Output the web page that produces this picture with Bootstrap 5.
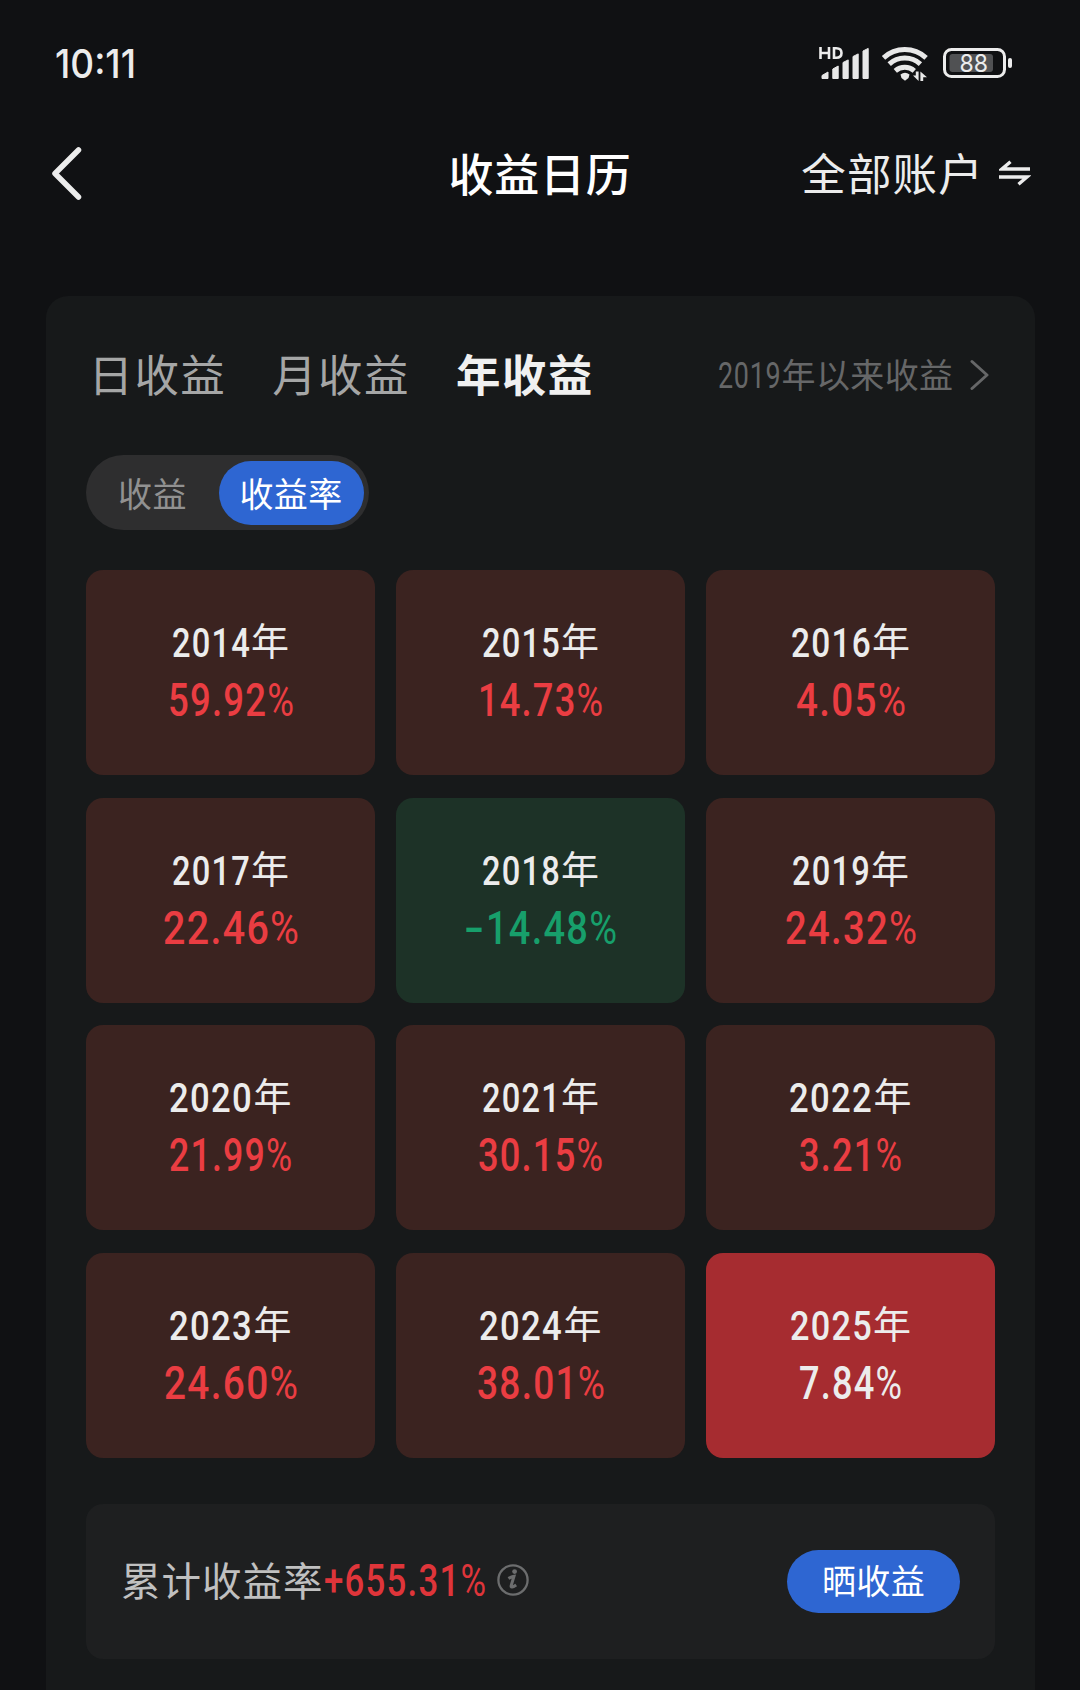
<!DOCTYPE html>
<html lang="zh-CN">
<head>
<meta charset="utf-8">
<meta name="viewport" content="width=device-width, initial-scale=1">
<title>收益日历</title>
<link href="https://cdn.jsdelivr.net/npm/bootstrap@5.3.0/dist/css/bootstrap.min.css" rel="stylesheet">
<style>
  body { background:#101113; color:#ececec; font-family:"Noto Sans CJK SC",sans-serif; line-height:1; height:1690px; overflow:hidden; }
  .num { font-family:Roboto,"Noto Sans CJK SC",sans-serif; font-weight:500; letter-spacing:1.5px; }
  .num i { font-style:normal; font-weight:400; letter-spacing:0; }
  .fit { display:inline-block; white-space:pre; transform-origin:0 50%; }
  svg { display:block; flex:none; }
  .status { height:118px; padding:0 66px 0 54.5px; }
  .clock { font-family:Inter,sans-serif; font-size:39px; font-weight:500; margin-top:8px; }
  .signals { margin-top:10px; }
  .topnav { height:110px; padding:0 49px 0 51px; }
  .topnav > * { flex:1 1 0; }
  .title { font-size:45px; font-weight:500; letter-spacing:.8px; color:#fff; padding-right:2px; margin-top:-2px; }
  .acct { font-size:44.5px; letter-spacing:1.2px; margin-top:-2px; }
  .swap { margin-left:15px; }
  .panel { margin:68px 45px 0 46px; padding:0 40px 0 40px; height:1394px; background:#17191a; border-radius:22px 22px 0 0; }
  .tabs { padding:54.5px 0 0 2.5px; height:159px; }
  .tablist { gap:46px; }
  .tab { font-size:44.5px; letter-spacing:1.4px; color:#a5a6a6; }
  .tab.on { color:#f0f0f0; font-weight:700; }
  .since { color:#666768; font-size:34px; letter-spacing:.4px; margin-top:6px; }
  .since .num { font-size:36px; font-weight:400; letter-spacing:1px; }
  .more { margin:2.5px 5px 0 16.5px; }
  .seg { width:283px; height:75px; border-radius:38px; background:#2e2e2f; padding:0 5px 0 32px; font-size:34px; letter-spacing:.4px; color:#919191; }
  .seg .pick { width:145px; height:64px; border-radius:32px; background:#2e66d2; color:#fff; padding-right:1px; }
  .years { margin-top:40px; display:grid; grid-template-columns:repeat(3,289px); grid-auto-rows:205px; gap:22.67px 21px; }
  .tile { background:#3b2320; border-radius:17px; padding-top:50px; text-align:center; }
  .tile .yr { height:58px; font-size:38px; line-height:1; color:#ececec; }
  .tile .yr .num { font-size:40px; vertical-align:-2px; }
  .tile .pct { font-size:45.5px; color:#ea3d42; }
  .tile.down { background:#1d3227; }
  .tile.down .pct { color:#179f6b; }
  .tile.now { background:#a62c30; }
  .tile.now .pct { color:#ececec; }
  .total { margin-top:46px; height:155px; border-radius:17px; background:#1e1f20; padding:0 35px 0 35px; }
  .total .cap { font-size:39.5px; letter-spacing:1px; color:#c0c0c0; }
  .total .num { font-size:44px; color:#df353a; }
  .info { margin:-2px 0 0 11px; }
  .share { width:173px; height:63px; border-radius:32px; background:#2e66d2; color:#fff; font-size:34px; letter-spacing:.4px; padding-bottom:2px; }
</style>
</head>
<body>
<header>
  <div class="status d-flex justify-content-between align-items-center">
    <span class="clock"><span class="fit" data-w="81">10:11</span></span>
    <svg class="signals" width="196" height="40" viewBox="818 44 196 40">
      <g fill="none" stroke="#ececec" stroke-width="2.6"><path d="M820.500 47v12M829 47v12M820.500 53h8.500M834 48.300v9.400h2.200c3.600 0 5.300-1.600 5.300-4.700s-1.700-4.700-5.300-4.700z"/></g>
      <g fill="#e8e8e8" stroke="#e8e8e8" stroke-width="1" stroke-linejoin="round"><path d="M822 78.500v-3l6-3.500v6.500zM832.800 78.500V69l5.400-3v12.500zM843 78.500V62.500l5.200-2.600v18.600zM853 78.500V56.500l5.200-2.600v24.600zM863 78.500V51l5.200-2.600v30.100z"/></g>
      <g fill="none" stroke="#e8e8e8" stroke-width="5"><path d="M883.500 57.800a31.500 31.500 0 0 1 42.600 0M889.200 64.200a23 23 0 0 1 31.200 0M895.300 70.800a14.500 14.500 0 0 1 19 0"/></g>
      <path d="M900.500 74.500q4.500-3.500 9 0l-1 3.500-3.500 2.800-3.500-2.800z" fill="#e8e8e8"/>
      <path d="M913 75.500l5.600 5.500V71.500h-2.800v4zM920.400 81V71.500l6.600 5.700h-3.800V81z" fill="#e8e8e8"/>
      <rect x="944.500" y="49.500" width="60" height="27" rx="7" fill="none" stroke="#ececec" stroke-width="3"/>
      <rect x="949.500" y="54" width="43.500" height="18" rx="3" fill="#505153"/>
      <text x="959.500" y="72" font-family="Inter, sans-serif" font-size="24" font-weight="400" fill="#ececec" textLength="28.500" lengthAdjust="spacingAndGlyphs">88</text>
      <rect x="1008" y="58" width="4" height="10" rx="2" fill="#ececec"/>
    </svg>
  </div>
  <nav class="topnav d-flex align-items-center">
    <div><svg width="32" height="56" viewBox="51 145 32 56" fill="none" stroke="#ececec" stroke-width="5.500" stroke-linecap="round" stroke-linejoin="round"><path d="M78.500 150L55 173.500 78.500 197"/></svg></div>
    <div class="title text-center">收益日历</div>
    <div class="d-flex justify-content-end align-items-center">
      <span class="acct text-nowrap">全部账户</span>
      <svg class="swap" width="32" height="26" viewBox="0 0 32 26" fill="none" stroke="#ececec" stroke-width="3.400"><path d="M31 9H3L11.500 1.800M0 17h28l-8.500 7.200"/></svg>
    </div>
  </nav>
</header>
<main class="panel">
  <div class="tabs d-flex justify-content-between">
    <div class="tablist d-flex"><span class="tab">日收益</span><span class="tab">月收益</span><span class="tab on">年收益</span></div>
    <div class="since d-flex"><div><span class="num"><span class="fit" data-w="63.5">2019</span></span>年以来收益</div>
      <svg class="more" width="20" height="32" viewBox="0 0 20 32" fill="none" stroke="#666768" stroke-width="3" stroke-linecap="round" stroke-linejoin="round"><path d="M2 2.500L17 16 2 29.500"/></svg></div>
  </div>
  <div class="seg d-flex align-items-center justify-content-between"><span>收益</span><span class="pick d-flex align-items-center justify-content-center">收益率</span></div>
  <section class="years">
    <div class="tile"><div class="yr"><span class="num fit" data-w="79">2014</span>年</div><div class="pct num"><span class="fit" data-w="126">59.92<i>%</i></span></div></div>
    <div class="tile"><div class="yr"><span class="num fit" data-w="79">2015</span>年</div><div class="pct num"><span class="fit" data-w="125">14.73<i>%</i></span></div></div>
    <div class="tile"><div class="yr"><span class="num fit" data-w="81">2016</span>年</div><div class="pct num"><span class="fit" data-w="110">4.05<i>%</i></span></div></div>
    <div class="tile"><div class="yr"><span class="num fit" data-w="79">2017</span>年</div><div class="pct num"><span class="fit" data-w="136">22.46<i>%</i></span></div></div>
    <div class="tile down"><div class="yr"><span class="num fit" data-w="79">2018</span>年</div><div class="pct num"><span class="fit" data-w="22">-</span><span class="fit" data-w="131">14.48<i>%</i></span></div></div>
    <div class="tile"><div class="yr"><span class="num fit" data-w="79">2019</span>年</div><div class="pct num"><span class="fit" data-w="132">24.32<i>%</i></span></div></div>
    <div class="tile"><div class="yr"><span class="num fit" data-w="84">2020</span>年</div><div class="pct num"><span class="fit" data-w="123">21.99<i>%</i></span></div></div>
    <div class="tile"><div class="yr"><span class="num fit" data-w="79">2021</span>年</div><div class="pct num"><span class="fit" data-w="125">30.15<i>%</i></span></div></div>
    <div class="tile"><div class="yr"><span class="num fit" data-w="84">2022</span>年</div><div class="pct num"><span class="fit" data-w="103">3.21<i>%</i></span></div></div>
    <div class="tile"><div class="yr"><span class="num fit" data-w="84">2023</span>年</div><div class="pct num"><span class="fit" data-w="134">24.60<i>%</i></span></div></div>
    <div class="tile"><div class="yr"><span class="num fit" data-w="84">2024</span>年</div><div class="pct num"><span class="fit" data-w="128">38.01<i>%</i></span></div></div>
    <div class="tile now"><div class="yr"><span class="num fit" data-w="83">2025</span>年</div><div class="pct num"><span class="fit" data-w="103">7.84<i>%</i></span></div></div>
  </section>
  <section class="total d-flex align-items-center justify-content-between">
    <div class="d-flex align-items-center">
      <div class="d-flex align-items-baseline"><span class="cap">累计收益率</span><span class="num"><span class="fit" data-w="162">+655.31<i>%</i></span></span></div>
      <svg class="info" width="32" height="32" viewBox="0 0 32 32"><circle cx="16" cy="16" r="14.600" fill="none" stroke="#6c6d6e" stroke-width="2.300"/><circle cx="17.600" cy="7.600" r="2.400" fill="#6c6d6e"/><path d="M11.500 14.500q3-2 5.500-2.300l-2.800 9.300q-.8 3.400 5-.5" fill="none" stroke="#6c6d6e" stroke-width="3"/></svg>
    </div>
    <span class="share d-flex align-items-center justify-content-center">晒收益</span>
  </section>
</main>
<script src="https://cdn.jsdelivr.net/npm/bootstrap@5.3.0/dist/js/bootstrap.bundle.min.js"></script>
<script>
  // Condense each numeral group to its design width
  document.querySelectorAll('.fit').forEach(function (el) {
    var n = el.getBoundingClientRect().width, w = +el.dataset.w;
    el.style.transform = 'scaleX(' + w / n + ')';
    el.style.marginRight = (w - n) + 'px';
  });
</script>
</body>
</html>
